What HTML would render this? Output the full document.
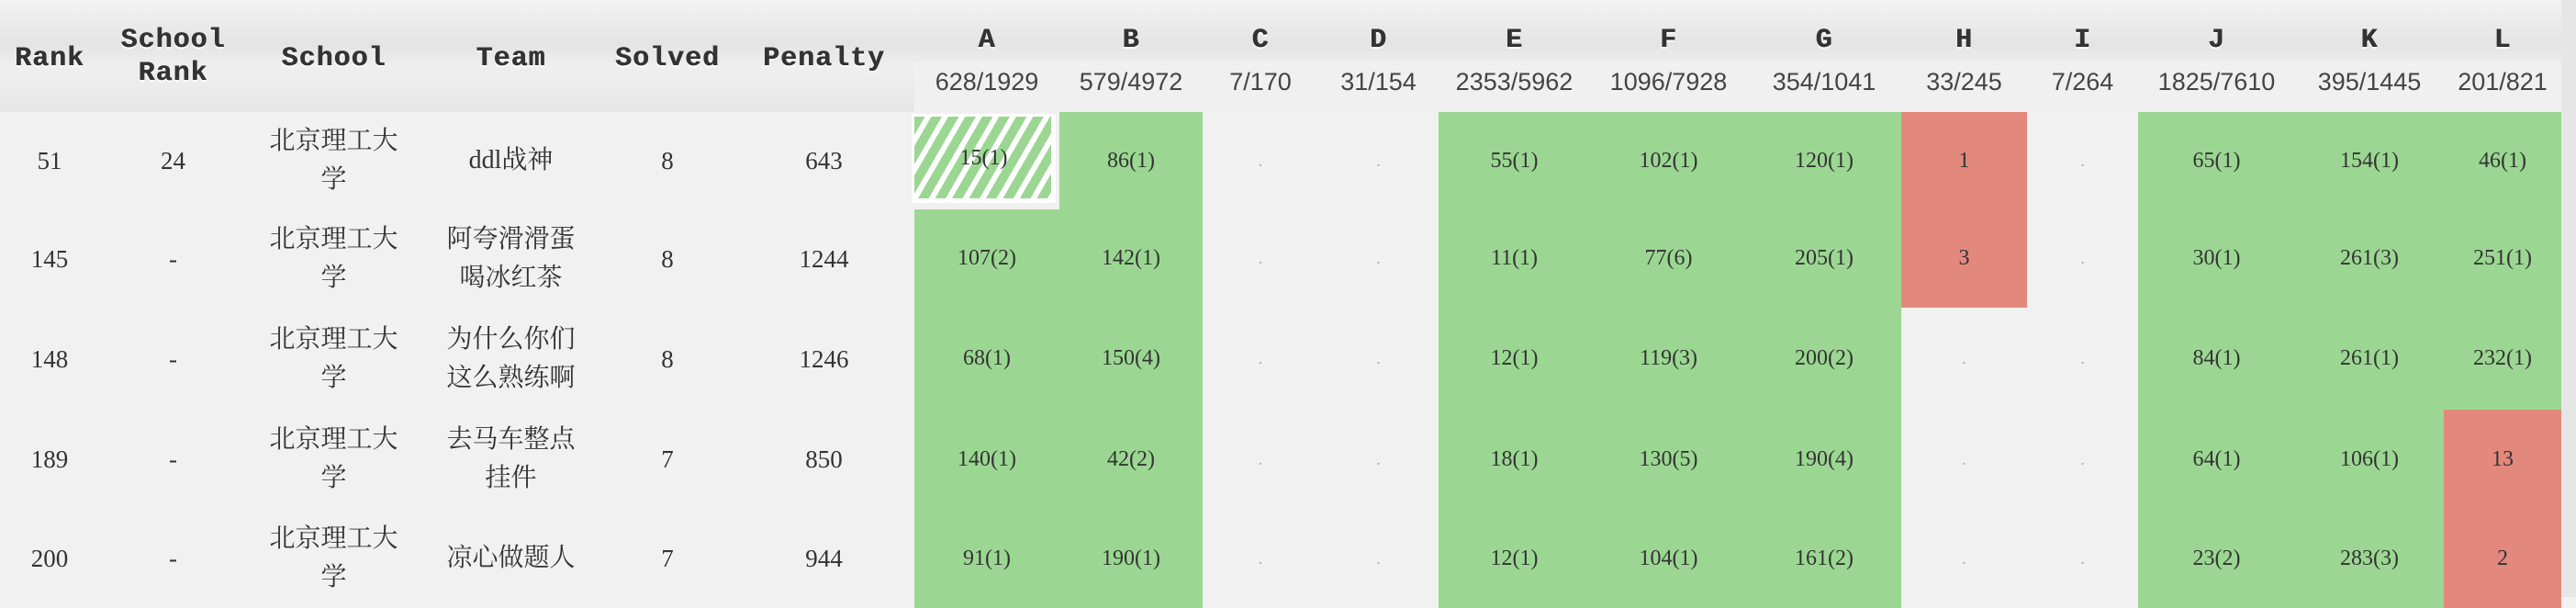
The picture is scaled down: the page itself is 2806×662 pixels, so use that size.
<!DOCTYPE html>
<html><head><meta charset="utf-8"><style>
html,body{margin:0;padding:0;}
body{width:2806px;height:650px;overflow:hidden;background:#f1f1f1;position:relative;font-family:"Liberation Serif","Noto Serif CJK SC",serif;color:#333;}
.hdr{position:absolute;left:0;top:0;width:2790px;height:122px;background:linear-gradient(#f3f3f3,#e4e4e4 40%,#efefef 60%,#e6e6e6);}
.stats{position:absolute;left:996px;top:68px;width:1794px;height:54px;background:#f0f0f0;}
.rs{position:absolute;left:2790px;top:0;width:16px;height:650px;background:#e6e6e6;}
.h{position:absolute;font-family:"Liberation Mono",monospace;font-weight:bold;font-size:30px;letter-spacing:1px;color:#333;text-align:center;text-shadow:0.5px 0 0 #333,0 2px 1px #fff;line-height:36px;}
.s{position:absolute;top:68px;font-family:"Liberation Sans",sans-serif;font-size:27px;color:#444;text-align:center;line-height:42px;}
.c{position:absolute;display:flex;align-items:center;justify-content:center;text-align:center;}
.b{font-size:27px;line-height:42px;}
.cj{font-family:"Liberation Serif","Noto Serif CJK SC",serif;font-size:28px;line-height:42px;}
.p{font-size:24px;}
.g{background:#9bd792;}
.r{background:#e3887d;}
.d{color:#aaa;font-size:18px;}
</style></head><body>
<div class="hdr"></div><div class="stats"></div><div class="rs"></div>
<div id="root"></div>
<script>
var E=[0,108,269,458,655,799,996,1154,1310,1436,1567,1732,1903,2071,2208,2329,2500,2662,2790];
var H='';
function col(i){return 'left:'+E[i]+'px;width:'+(E[i+1]-E[i])+'px;';}
var heads=['Rank','School<br>Rank','School','Team','Solved','Penalty'];
for(var i=0;i<6;i++){var two=i==1;H+='<div class="h" style="'+col(i)+'top:'+(two?26:46)+'px">'+heads[i]+'</div>';}
var L='ABCDEFGHIJKL'.split('');
var S=['628/1929','579/4972','7/170','31/154','2353/5962','1096/7928','354/1041','33/245','7/264','1825/7610','395/1445','201/821'];
for(var j=0;j<12;j++){H+='<div class="h" style="'+col(6+j)+'top:26px">'+L[j]+'</div><div class="s" style="'+col(6+j)+'">'+S[j]+'</div>';}
var rows=[
['51','24','ddl战神','8','643',['15(1)','86(1)','.','.','55(1)','102(1)','120(1)','r1','.','65(1)','154(1)','46(1)']],
['145','-','阿夸滑滑蛋<br>喝冰红茶','8','1244',['107(2)','142(1)','.','.','11(1)','77(6)','205(1)','r3','.','30(1)','261(3)','251(1)']],
['148','-','为什么你们<br>这么熟练啊','8','1246',['68(1)','150(4)','.','.','12(1)','119(3)','200(2)','.','.','84(1)','261(1)','232(1)']],
['189','-','去马车整点<br>挂件','7','850',['140(1)','42(2)','.','.','18(1)','130(5)','190(4)','.','.','64(1)','106(1)','r13']],
['200','-','凉心做题人','7','944',['91(1)','190(1)','.','.','12(1)','104(1)','161(2)','.','.','23(2)','283(3)','r2']]];
var tops=[122,228,335,446,554];
var hs=[106,107,111,108,108];
for(var r=0;r<5;r++){
 var R=rows[r],t=tops[r],h=hs[r];
 var st='top:'+t+'px;height:'+h+'px;';
 H+='<div class="c b" style="'+col(0)+st+'">'+R[0]+'</div>';
 H+='<div class="c b" style="'+col(1)+st+'">'+R[1]+'</div>';
 H+='<div class="c cj" style="'+col(2)+st+'">北京理工大<br>学</div>';
 H+='<div class="c cj" style="'+col(3)+st+'">'+R[2]+'</div>';
 H+='<div class="c b" style="'+col(4)+st+'">'+R[3]+'</div>';
 H+='<div class="c b" style="'+col(5)+st+'">'+R[4]+'</div>';
 for(var j=0;j<12;j++){
  var v=R[5][j],cls='c p',txt=v;
  if(v=='.'){cls+=' d';}
  else if(v[0]=='r'){cls+=' r';txt=v.slice(1);}
  else cls+=' g';
  if(r==0&&j==0){
   H+='<div class="c p" style="left:993px;width:157px;top:124px;height:97px;background:#fff;"><div style="position:absolute;left:3px;top:3px;right:5px;bottom:5px;background:repeating-linear-gradient(120deg,#9bd792 0 10px,#fff 10px 16px);"></div><span style="position:relative">15(1)</span></div>';
   continue;
  }
  H+='<div class="'+cls+'" style="'+col(6+j)+st+'">'+txt+'</div>';
 }
}
document.getElementById('root').innerHTML=H;
</script>
</body></html>
